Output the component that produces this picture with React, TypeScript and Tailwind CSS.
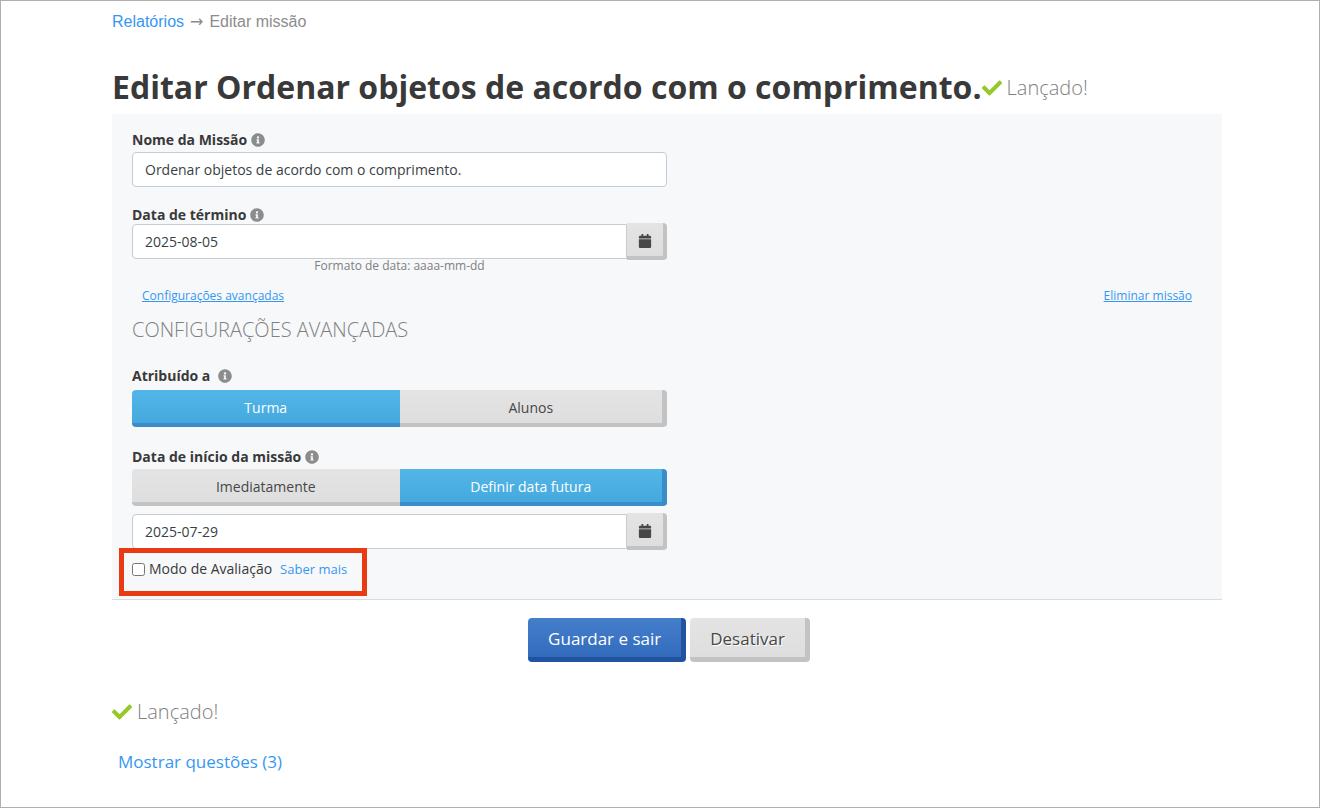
import type { ReactNode } from 'react'
import { FaCalendar, FaCheck, FaInfoCircle } from 'react-icons/fa'

interface FieldLabelProps {
  htmlFor?: string
  id?: string
  wide?: boolean
  children: ReactNode
}

function FieldLabel({ htmlFor, id, wide, children }: FieldLabelProps): ReactNode {
  return (
    <div
      className={`flex h-4 items-center text-sm leading-4 font-bold text-[#393939] ${wide ? 'gap-2' : 'gap-1'}`}
    >
      {htmlFor ? <label htmlFor={htmlFor}>{children}</label> : <span id={id}>{children}</span>}
      <FaInfoCircle className="size-[14px] text-[#8c8c8c]" aria-hidden="true" />
    </div>
  )
}

function DateField({ id, value, label }: { id: string; value: string; label?: string }): ReactNode {
  return (
    <div className="flex items-center">
      <input
        id={id}
        type="text"
        defaultValue={value}
        aria-label={label}
        className="h-[35px] min-w-0 flex-1 rounded-l border border-[#c6ccd4] bg-white px-3 text-sm text-[#393f46] outline-none"
      />
      <button
        type="button"
        aria-label="Abrir calendário"
        className="flex h-[37px] w-10 items-center justify-center rounded-r border-r-4 border-b-4 border-[#c3c3c3] bg-linear-to-b from-[#e4e4e4] to-[#dedede] pt-0.5 text-[#474747]"
      >
        <FaCalendar className="size-[14px]" />
      </button>
    </div>
  )
}

interface ToggleProps {
  options: [string, string]
  selected: 0 | 1
  labelledBy: string
}

const toggleOn = 'border-[#3b8cc9] from-[#52b6e8] to-[#45a9de] text-white'
const toggleOff = 'border-[#c3c3c3] from-[#e4e4e4] to-[#dedede] text-[#474747]'

function Toggle({ options, selected, labelledBy }: ToggleProps): ReactNode {
  return (
    <div role="group" aria-labelledby={labelledBy} className="grid h-[37px] grid-cols-2">
      <button
        type="button"
        aria-pressed={selected === 0}
        className={`rounded-l border-b-4 bg-linear-to-b pt-0.5 text-sm ${selected === 0 ? toggleOn : toggleOff}`}
      >
        {options[0]}
      </button>
      <button
        type="button"
        aria-pressed={selected === 1}
        className={`rounded-r border-r-5 border-b-4 bg-linear-to-b pt-0.5 text-sm ${selected === 1 ? toggleOn : toggleOff}`}
      >
        {options[1]}
      </button>
    </div>
  )
}

function Launched(): ReactNode {
  return (
    <span className="flex items-center gap-[5px] text-xl leading-7 font-light text-[#808080]">
      <FaCheck className="size-5 text-[#95c92b]" aria-hidden="true" />
      Lançado!
    </span>
  )
}

export default function App(): ReactNode {
  return (
    <div className="min-h-screen border border-[#b0b0b0] bg-white pr-[97px] pl-[111px] font-['Open_Sans',sans-serif] text-[#393939]">
      <nav className="flex h-[42px] items-center gap-[6px] font-['Liberation_Sans',Arial,sans-serif] text-base text-[#8c8c8c]">
        <a href="#relatorios" className="text-[#3597f3]">
          Relatórios
        </a>
        <span className="font-['DejaVu_Sans',sans-serif]">→</span>
        <span>Editar missão</span>
      </nav>

      <main>
        <header className="flex items-end pt-[22px] pb-1">
          <h1 className="pb-0.5 text-[32px] leading-[43px] font-bold">
            Editar Ordenar objetos de acordo com o comprimento.
          </h1>
          <div className="pb-2">
            <Launched />
          </div>
        </header>

        <form>
          <section className="border-b border-[#d8dce1] bg-[#f7f8fa] px-5 pt-[18px] pb-5">
            <div className="w-1/2">
              <FieldLabel htmlFor="nome">Nome da Missão</FieldLabel>
              <input
                id="nome"
                type="text"
                defaultValue="Ordenar objetos de acordo com o comprimento."
                className="mt-1 mb-5 block h-[35px] w-full rounded border border-[#c6ccd4] bg-white px-3 text-sm text-[#393f46] outline-none"
              />
              <FieldLabel htmlFor="termino">Data de término</FieldLabel>
              <DateField id="termino" value="2025-08-05" />
              <p className="text-center text-xs leading-3 text-[#808080]">
                Formato de data: aaaa-mm-dd
              </p>
            </div>

            <div className="mt-4 flex justify-between px-[10px] text-xs leading-4 text-[#3597f3]">
              <a href="#avancadas" className="underline">
                Configurações avançadas
              </a>
              <a href="#eliminar" className="underline">
                Eliminar missão
              </a>
            </div>

            <h2 id="avancadas" className="mt-3 mb-6 text-xl leading-7 font-light text-[#808080]">
              CONFIGURAÇÕES AVANÇADAS
            </h2>

            <div className="w-1/2">
              <FieldLabel id="atribuido" wide>
                Atribuído a
              </FieldLabel>
              <div className="mt-[6px] mb-[22px]">
                <Toggle options={['Turma', 'Alunos']} selected={0} labelledBy="atribuido" />
              </div>

              <FieldLabel id="inicio">Data de início da missão</FieldLabel>
              <div className="mt-1 mb-[7px]">
                <Toggle
                  options={['Imediatamente', 'Definir data futura']}
                  selected={1}
                  labelledBy="inicio"
                />
              </div>
              <DateField id="data-inicio" value="2025-07-29" label="Data de início" />

              <div className="relative mt-[9px] flex h-5 w-fit items-center text-sm">
                <input id="avaliacao" type="checkbox" className="mr-1 size-[13px]" />
                <label htmlFor="avaliacao">Modo de Avaliação</label>
                <a href="#saber-mais" className="ml-2 text-[13px] text-[#3597f3]">
                  Saber mais
                </a>
                {/* highlight frame */}
                <span className="pointer-events-none absolute -top-[11px] -right-5 -bottom-[17px] -left-[13px] border-5 border-[#ea3a14]" />
              </div>
            </div>
          </section>

          <div className="mt-[18px] flex justify-center gap-1 pl-1 text-[17px] leading-7">
            <button
              type="submit"
              className="h-11 rounded border-r-5 border-b-5 border-[#2153a2] bg-linear-to-b from-[#457fcb] to-[#326bbd] px-5 pt-0.5 text-white"
            >
              Guardar e sair
            </button>
            <button
              type="button"
              className="h-11 rounded border-r-5 border-b-5 border-[#c3c3c3] bg-linear-to-b from-[#e4e4e4] to-[#dedede] px-5 pt-0.5 text-[#474747] text-shadow-[1px_1px_0_#ffffff]"
            >
              Desativar
            </button>
          </div>
        </form>

        <div className="mt-9">
          <Launched />
        </div>
        <a href="#questoes" className="mt-[22px] ml-[6px] inline-block text-[17px] leading-7 text-[#3597f3]">
          Mostrar questões (3)
        </a>
      </main>
    </div>
  )
}
